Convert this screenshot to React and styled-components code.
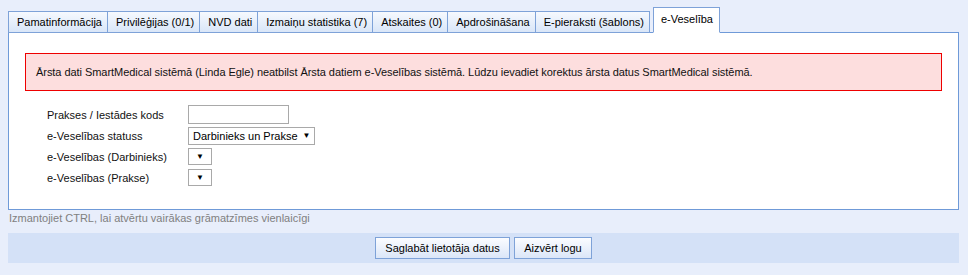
import React from "react";
import styled, { createGlobalStyle } from "styled-components";

const Global = createGlobalStyle`
  html, body { margin: 0; padding: 0; background: #e8eefb; }
  body { font-family: "Liberation Sans", Arial, sans-serif; font-size: 11px; color: #000; }
`;

const Page = styled.div`
  padding: 7px 9px 0 8px;
  width: 951px;
`;

const TabBar = styled.div`
  display: flex;
  align-items: flex-end;
  position: relative;
  z-index: 1;
  margin-bottom: -1px;
`;

const Tab = styled.div`
  box-sizing: border-box;
  height: ${(p) => (p.$active ? "26px" : "22px")};
  line-height: ${(p) => (p.$active ? "22px" : "20px")};
  padding: ${(p) => (p.$active ? "0 6px 0 7px" : "0 5px 0 8px")};
  margin-left: ${(p) => (p.$active ? "3px" : p.$first ? "0" : "-1px")};
  border: 1px solid #7ea2d8;
  border-bottom-color: ${(p) => (p.$active ? "#fff" : "#7ea2d8")};
  background: ${(p) => (p.$active ? "#fff" : "linear-gradient(#f6f9fe, #d9e6f8)")};
  white-space: nowrap;
  color: #000;
`;

const Panel = styled.div`
  box-sizing: border-box;
  border: 1px solid #6f9ad8;
  background: #fff;
  height: 178px;
  padding: 20px 16px 0 16px;
`;

const ErrorBox = styled.div`
  box-sizing: border-box;
  height: 38px;
  border: 1px solid #ee0000;
  background: #fddede;
  padding: 0 10px;
  display: flex;
  align-items: center;
  color: #111;
  letter-spacing: -0.05px;
`;

const Form = styled.div`
  display: grid;
  grid-template-columns: 141px auto;
  grid-auto-rows: 21px;
  align-items: center;
  justify-items: start;
  margin: 13px 0 0 22px;
`;

const Label = styled.div`
  color: #111;
`;

const TextInput = styled.div`
  box-sizing: border-box;
  width: 101px;
  height: 19px;
  border: 1px solid #a9a9a9;
  background: #fff;
`;

const Select = styled.div`
  box-sizing: border-box;
  height: ${(p) => (p.$empty ? "17px" : "18px")};
  min-width: 24px;
  border: 1px solid #a9a9a9;
  background: #fff;
  display: flex;
  align-items: center;
  justify-content: ${(p) => (p.$empty ? "center" : "flex-start")};
  padding: ${(p) => (p.$empty ? "0" : "0 4px 0 4px")};
  gap: 5px;
  color: #000;
`;

const Arrow = styled.span`
  font-size: 8px;
  line-height: 1;
`;

const Hint = styled.div`
  color: #808080;
  height: 23px;
  line-height: 17px;
  padding-left: 1px;
`;

const Footer = styled.div`
  height: 30px;
  background: #d4e1f7;
  display: flex;
  align-items: center;
  justify-content: center;
  gap: 4px;
`;

const Button = styled.button`
  box-sizing: border-box;
  height: 22px;
  width: ${(p) => p.$w}px;
  border: 1px solid #7ea2d8;
  background: linear-gradient(#fbfcff, #dbe6f8);
  font-family: "Liberation Sans", Arial, sans-serif;
  font-size: 11px;
  color: #000;
  padding: 0;
`;

const tabs = [
  "Pamatinformācija",
  "Privilēģijas (0/1)",
  "NVD dati",
  "Izmaiņu statistika (7)",
  "Atskaites (0)",
  "Apdrošināšana",
  "E-pieraksti (šablons)",
];

export default function App() {
  return (
    <>
      <Global />
      <Page>
        <TabBar>
          {tabs.map((t, i) => (
            <Tab key={t} $first={i === 0}>{t}</Tab>
          ))}
          <Tab $active>e-Veselība</Tab>
        </TabBar>
        <Panel>
          <ErrorBox>
            Ārsta dati SmartMedical sistēmā (Linda Egle) neatbilst Ārsta datiem e-Veselības sistēmā. Lūdzu ievadiet korektus ārsta datus SmartMedical sistēmā.
          </ErrorBox>
          <Form>
            <Label>Prakses / Iestādes kods</Label>
            <TextInput />
            <Label>e-Veselības statuss</Label>
            <Select>
              Darbinieks un Prakse <Arrow>▼</Arrow>
            </Select>
            <Label>e-Veselības (Darbinieks)</Label>
            <Select $empty>
              <Arrow>▼</Arrow>
            </Select>
            <Label>e-Veselības (Prakse)</Label>
            <Select $empty>
              <Arrow>▼</Arrow>
            </Select>
          </Form>
        </Panel>
        <Hint>Izmantojiet CTRL, lai atvērtu vairākas grāmatzīmes vienlaicīgi</Hint>
        <Footer>
          <Button $w={135}>Saglabāt lietotāja datus</Button>
          <Button $w={78}>Aizvērt logu</Button>
        </Footer>
      </Page>
    </>
  );
}
